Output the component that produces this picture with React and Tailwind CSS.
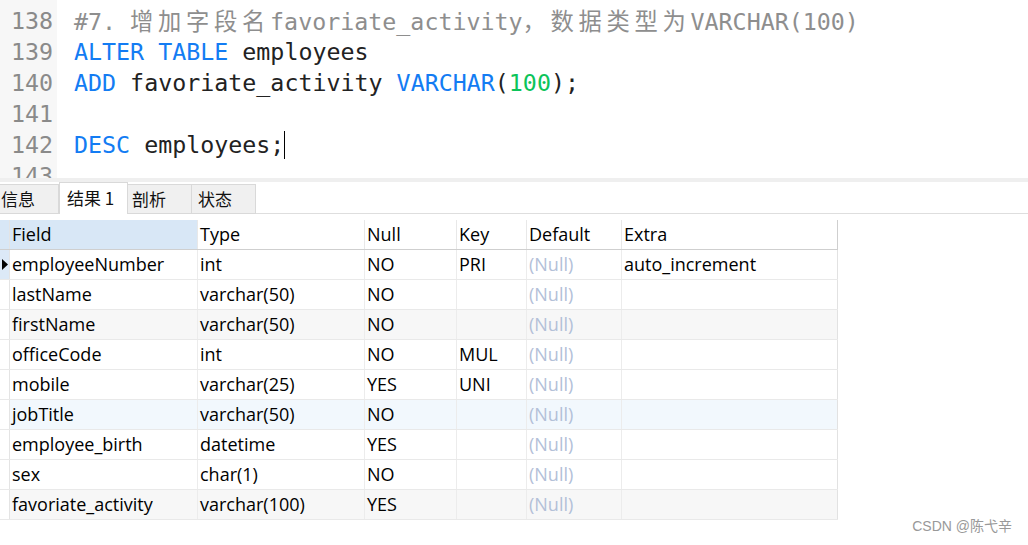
import React from 'react';

const mono = { fontFamily: '"DejaVu Sans Mono", "Noto Sans CJK SC", monospace' };

// wide CJK glyphs take two mono cells in the editor
const Cjk = ({ children }) => (
  <span className="tracking-[4.7px]" style={{ fontFamily: '"Noto Sans CJK SC", sans-serif' }}>
    {children}
  </span>
);

const Kw = ({ children }) => <span className="text-[#137cf3]">{children}</span>;

const codeLines = [
  {
    n: 138,
    body: (
      <span className="text-[#8e8e8e]">
        #7. <Cjk>增加字段名</Cjk>favoriate_activity<Cjk>，数据类型为</Cjk>VARCHAR(100)
      </span>
    ),
  },
  { n: 139, body: (<><Kw>ALTER TABLE</Kw> employees</>) },
  {
    n: 140,
    body: (
      <>
        <Kw>ADD</Kw> favoriate_activity <Kw>VARCHAR</Kw>(<span className="text-[#0cc45a]">100</span>);
      </>
    ),
  },
  { n: 141, body: null },
  {
    n: 142,
    body: (
      <>
        <Kw>DESC</Kw> employees;
        <span className="inline-block w-px h-[28px] bg-black align-middle -mt-1" />
      </>
    ),
  },
  { n: 143, body: null },
];

const columns = [
  { key: 'field', label: 'Field', w: 'w-[188px]' },
  { key: 'type', label: 'Type', w: 'w-[167px]' },
  { key: 'nul', label: 'Null', w: 'w-[92px]' },
  { key: 'key', label: 'Key', w: 'w-[70px]' },
  { key: 'def', label: 'Default', w: 'w-[95px]' },
  { key: 'extra', label: 'Extra', w: 'w-[216px]' },
];

const rows = [
  { field: 'employeeNumber', type: 'int', nul: 'NO', key: 'PRI', extra: 'auto_increment', bg: 'bg-white' },
  { field: 'lastName', type: 'varchar(50)', nul: 'NO', key: '', extra: '', bg: 'bg-white' },
  { field: 'firstName', type: 'varchar(50)', nul: 'NO', key: '', extra: '', bg: 'bg-[#f7f7f7]' },
  { field: 'officeCode', type: 'int', nul: 'NO', key: 'MUL', extra: '', bg: 'bg-white' },
  { field: 'mobile', type: 'varchar(25)', nul: 'YES', key: 'UNI', extra: '', bg: 'bg-white' },
  { field: 'jobTitle', type: 'varchar(50)', nul: 'NO', key: '', extra: '', bg: 'bg-[#f2f8fd]' },
  { field: 'employee_birth', type: 'datetime', nul: 'YES', key: '', extra: '', bg: 'bg-white' },
  { field: 'sex', type: 'char(1)', nul: 'NO', key: '', extra: '', bg: 'bg-white' },
  { field: 'favoriate_activity', type: 'varchar(100)', nul: 'YES', key: '', extra: '', bg: 'bg-[#f7f7f7]' },
];

const tabs = ['信息', '结果 1', '剖析', '状态'];

const App = () => {
  return (
    <div className="relative w-[1028px] h-[545px] bg-white overflow-hidden">
      {/* editor */}
      <div className="flex h-[178px] overflow-hidden text-[23.3px]" style={mono}>
        <div className="w-[57px] bg-[#f7f7f7] pt-[5px] pr-[4px] text-right text-[#8a8a8a]">
          {codeLines.map((l) => (
            <div key={l.n} className="h-[31px] leading-[31px]">{l.n}</div>
          ))}
        </div>
        <div className="flex-1 pt-[5px] pl-[17px] text-[#222]">
          {codeLines.map((l) => (
            <div key={l.n} className="h-[31px] leading-[31px] whitespace-pre">{l.body}</div>
          ))}
        </div>
      </div>

      {/* splitter */}
      <div className="h-[4px] bg-[#efefef]" />

      {/* result tabs */}
      <div
        className="flex items-end h-[32px] border-b border-[#dedede] text-[17px] text-[#111]"
        style={{ fontFamily: '"Noto Sans CJK SC", sans-serif' }}
      >
        <div className="w-[59px] h-[30px] -mb-px bg-[#f0f0f0] border border-l-0 border-[#d9d9d9] leading-[28px] pl-[1px]">
          {tabs[0]}
        </div>
        <div className="w-[69px] h-[32px] -mb-px bg-white border border-b-0 border-[#d9d9d9] leading-[30px] pl-[7px] whitespace-pre">
          {'结果 1'}
        </div>
        <div className="w-[64px] h-[30px] -mb-px bg-[#f0f0f0] border border-l-0 border-[#d9d9d9] leading-[28px] pl-[4px]">
          {tabs[2]}
        </div>
        <div className="w-[64px] h-[30px] -mb-px bg-[#f0f0f0] border border-l-0 border-[#d9d9d9] leading-[28px] pl-[6px]">
          {tabs[3]}
        </div>
      </div>

      {/* result grid */}
      <div className="pt-[6px] text-[18px] text-black" style={{ fontFamily: '"Open Sans", "Noto Sans", sans-serif' }}>
        <div className="flex h-[30px] w-fit border-b border-[#cfcfcf]">
          <div className="w-[10px] bg-[#d8e7f6] border-r border-[#e4e4e4]" />
          {columns.map((c, i) => (
            <div
              key={c.key}
              className={`${c.w} flex items-center pl-[2px] border-r ${
                i === columns.length - 1 ? 'border-[#cfcfcf]' : 'border-[#e8e8e8]'
              } ${i === 0 ? 'bg-[#d8e7f6]' : 'bg-white'}`}
            >
              {c.label}
            </div>
          ))}
        </div>
        {rows.map((r, ri) => (
          <div key={r.field} className={`flex h-[30px] border-b border-[#e9e9e9] w-fit ${r.bg}`}>
            <div
              className={`w-[10px] flex items-center border-r border-[#e4e4e4] ${
                ri === 0 ? 'bg-[#dce9f7]' : 'bg-white'
              }`}
            >
              {ri === 0 && (
                <svg width="6" height="11" viewBox="0 0 6 11" className="ml-[2px]">
                  <path d="M0 0 L6 5.5 L0 11 Z" fill="#000" />
                </svg>
              )}
            </div>
            {columns.map((c, i) => (
              <div
                key={c.key}
                className={`${c.w} flex items-center pl-[2px] border-r ${
                  i === columns.length - 1 ? 'border-[#e2e2e2]' : 'border-[#ececec]'
                } ${c.key === 'def' ? 'text-[#b3c0d8]' : ''}`}
              >
                {c.key === 'def' ? '(Null)' : r[c.key]}
              </div>
            ))}
          </div>
        ))}
      </div>

      {/* watermark */}
      <div
        className="absolute right-[16px] bottom-[8px] text-[14px] text-[#999]"
        style={{ fontFamily: '"Liberation Sans", "Noto Sans CJK SC", sans-serif' }}
      >
        CSDN @陈弋辛
      </div>
    </div>
  );
};

export default App;
